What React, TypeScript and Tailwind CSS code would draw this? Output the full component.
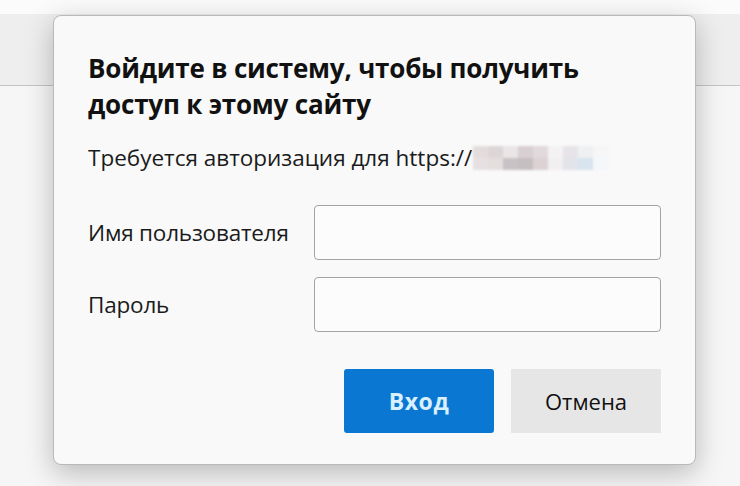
const blurTop = ["#e4dcdc", "#ddd6d8", "#ebe6e6", "#d8cfd2", "#e2d9dc", "#f4f2f2", "#e6e4e8", "#eef0f2", "#f6f6f6"];
const blurBottom = ["#e6e0e2", "#e4dede", "#c8c2c6", "#c6bfc2", "#dcd2d4", "#f1efef", "#e2e4ea", "#d8e4ee", "#f4f6f8"];

const Field = ({ label }: { label: string }) => (
  <div className="flex items-center justify-between">
    <span className="text-[22.5px] leading-[28px] text-[#1b1b1b] tracking-[-0.2px]">{label}</span>
    <div className="w-[347px] h-[55px] rounded-[4px] border border-[#a3a3a3] bg-[#fcfcfc]" />
  </div>
);

export default function App() {
  return (
    <div className="relative w-[740px] h-[486px] overflow-hidden bg-[#f6f6f6]" style={{ fontFamily: '"Open Sans", "Noto Sans", sans-serif' }}>
      {/* page behind the dialog */}
      <div className="h-[14px] bg-[#fbfbfb]" />
      <div className="h-[72px] bg-[#eeeeee] border-b border-[#c4c4c4]" />

      {/* dialog */}
      <div className="absolute left-[53px] top-[15px] w-[643px] h-[450px] rounded-[8px] border border-[#b9b9b9] bg-[#f9f9f9] shadow-[0_8px_28px_rgba(0,0,0,0.25)] pl-[34px] pr-[34px] pt-[34px]">
        <h1 className="text-[26px] leading-[36px] font-bold text-[#111] tracking-[-0.2px]">
          Войдите в систему, чтобы получить
          <br />
          доступ к этому сайту
        </h1>

        <div className="mt-[22px] h-[28px] flex items-center text-[22.5px] text-[#1b1b1b]">
          <span>Требуется авторизация для https://</span>
          <div className="ml-[1px] flex flex-col blur-[1px]">
            <div className="flex">
              {blurTop.map((c, i) => (
                <div key={i} className="w-[15px] h-[12px]" style={{ backgroundColor: c }} />
              ))}
            </div>
            <div className="flex">
              {blurBottom.map((c, i) => (
                <div key={i} className="w-[15px] h-[12px]" style={{ backgroundColor: c }} />
              ))}
            </div>
          </div>
        </div>

        <div className="mt-[33px] flex flex-col gap-[17px]">
          <Field label="Имя пользователя" />
          <Field label="Пароль" />
        </div>

        <div className="mt-[37px] flex justify-end gap-[17px]">
          <button className="w-[150px] h-[64px] rounded-[3px] bg-[#0a78d2] text-[23px] font-bold text-[#d8f0ff] tracking-[0.6px]">
            Вход
          </button>
          <button className="w-[150px] h-[64px] bg-[#e6e6e6] text-[22px] text-[#111]">
            Отмена
          </button>
        </div>
      </div>
    </div>
  );
}
